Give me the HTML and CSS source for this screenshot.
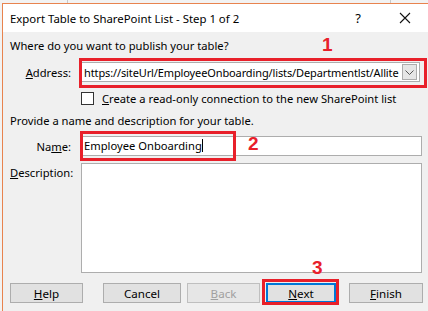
FILE: index.html
```html
<!DOCTYPE html>
<html>
<head>
    <title>Export Table to SharePoint List - Step 1 of 2</title>
    <link rel="stylesheet" href="styles.css">
</head>
<body>
    <div class="backdrop">
        <span class="grid-line first"></span>
        <span class="grid-line second"></span>
    </div>
    <div class="dialog">
        <div class="titlebar">
            <span class="title">Export Table to SharePoint List - Step 1 of 2</span>
            <span class="help-btn">?</span>
            <span class="close-btn">
                <svg width="12" height="12" viewBox="0 0 12 12"><path d="M1 1L11 11M11 1L1 11" stroke="#111" stroke-width="1.1" fill="none"/></svg>
            </span>
        </div>

        <div class="content">
            <p class="section">Where do you want to publish your table?</p>
            <div class="row address-row">
                <label class="label"><u>A</u>ddress:</label>
                <div class="combo">
                    <span class="combo-text">https://siteUrl/EmployeeOnboarding/lists/Departmentlst/Allite</span>
                    <span class="combo-arrow">
                        <svg width="9" height="5" viewBox="0 0 9 5"><path d="M0.5 0.5L4.5 4.5L8.5 0.5" stroke="#555" stroke-width="1" fill="none"/></svg>
                    </span>
                </div>
            </div>
            <div class="row check-row">
                <span class="checkbox"></span>
                <span><u>C</u>reate a read-only connection to the new SharePoint list</span>
            </div>

            <p class="section second">Provide a name and description for your table.</p>
            <div class="row name-row">
                <label class="label">Na<u>m</u>e:</label>
                <div class="textbox">Employee Onboarding<span class="caret"></span></div>
            </div>
            <div class="row desc-row">
                <label class="label left"><u>D</u>escription:</label>
                <div class="textarea"></div>
            </div>

            <div class="buttons">
                <button class="btn help"><u>H</u>elp</button>
                <button class="btn cancel">Cancel</button>
                <button class="btn back" disabled><u>B</u>ack</button>
                <button class="btn next default"><u>N</u>ext</button>
                <button class="btn finish"><u>F</u>inish</button>
            </div>
        </div>

        <!-- annotation markers -->
        <span class="mark box-address"></span>
        <span class="mark box-name"></span>
        <span class="mark box-next"></span>
        <span class="num num-1">1</span>
        <span class="num num-2">2</span>
        <span class="num num-3">3</span>
    </div>
</body>
</html>
```

FILE: styles.css
```css
body { margin: 0; background: #f2f2f2; font-family: "Segoe UI", "Noto Sans", Arial, sans-serif; font-size: 11.2px; color: #000; overflow: hidden; }
.backdrop { height: 3px; position: relative; }
.grid-line { position: absolute; top: 0; width: 1px; height: 3px; background: #c8c8c8; }
.grid-line.first { left: 67px; }
.grid-line.second { left: 390px; }

.dialog { position: relative; margin-left: 2px; border-left: 1px solid #e8834e; border-top: 1px solid #e8834e; background: #f0f0f0; height: 308px; }
.titlebar { height: 28px; background: #fff; display: flex; align-items: center; padding-left: 7px; }
.title { flex: 1; font-size: 11.4px; }
.help-btn { width: 14px; margin-right: 34px; font-size: 13px; text-align: center; }
.close-btn { width: 12px; margin-right: 17px; display: flex; }

.content { padding: 0 0 0 7px; }
p { margin: 0; }
.section { height: 28px; line-height: 28px; }
.section.second { height: 20px; line-height: 20px; margin-top: 4px; }

.row { display: flex; align-items: center; }
.label { width: 61px; text-align: right; margin-right: 10px; flex: none; }
.label.left { text-align: left; align-self: flex-start; padding-top: 2px; }

.combo { width: 339px; height: 20px; background: #fff; border: 1px solid #adadad; display: flex; align-items: center; box-sizing: border-box; }
.combo-text { flex: 1; padding-left: 2px; white-space: nowrap; overflow: hidden; font-size: 11px; letter-spacing: -0.12px; }
.combo-arrow { width: 15px; height: 16px; margin-right: 2px; background: #e6e6e6; border: 1px solid #adadad; box-sizing: border-box; display: flex; align-items: center; justify-content: center; flex: none; }
.address-row { height: 24px; }

.check-row { margin-top: 5px; padding-left: 71px; height: 18px; }
.checkbox { width: 13px; height: 13px; border: 1px solid #333; background: #fff; box-sizing: border-box; margin-right: 8px; }

.name-row { margin-top: 4px; height: 22px; }
.textbox { width: 341px; height: 20px; line-height: 18px; background: #fff; border: 1px solid #adadad; box-sizing: border-box; padding-left: 2px; }
.caret { display: inline-block; width: 1px; height: 13px; background: #000; vertical-align: -2px; }

.desc-row { margin-top: 6px; }
.textarea { width: 341px; height: 110px; background: #fff; border: 1px solid #adadad; box-sizing: border-box; }

.buttons { display: flex; margin-top: 10px; }
.btn { height: 20px; padding: 0; font-family: inherit; font-size: 11.6px; background: #e1e1e1; border: 1px solid #adadad; color: #000; }
.btn.help { width: 73px; }
.btn.cancel { width: 78px; margin-left: 20px; }
.btn.back { width: 73px; margin-left: 6px; color: #a0a0a0; border-color: #bfbfbf; background: #e6e6e6; }
.btn.next { width: 70px; margin-left: 6px; }
.btn.default { border: 2px solid #0078d7; }
.btn.finish { width: 74px; margin-left: 13px; }

.mark { position: absolute; border: 3px solid #e8202a; box-sizing: border-box; }
.box-address { left: 76px; top: 54px; width: 348px; height: 30px; }
.box-name { left: 77px; top: 127px; width: 156px; height: 30px; }
.box-next { left: 259px; top: 275px; width: 77px; height: 26px; }
.num { position: absolute; color: #e8202a; font-family: "Liberation Sans", Arial, sans-serif; font-weight: bold; font-size: 19px; line-height: 19px; }
.num-1 { left: 319px; top: 31px; }
.num-2 { left: 245px; top: 130px; }
.num-3 { left: 309px; top: 254px; }
```
